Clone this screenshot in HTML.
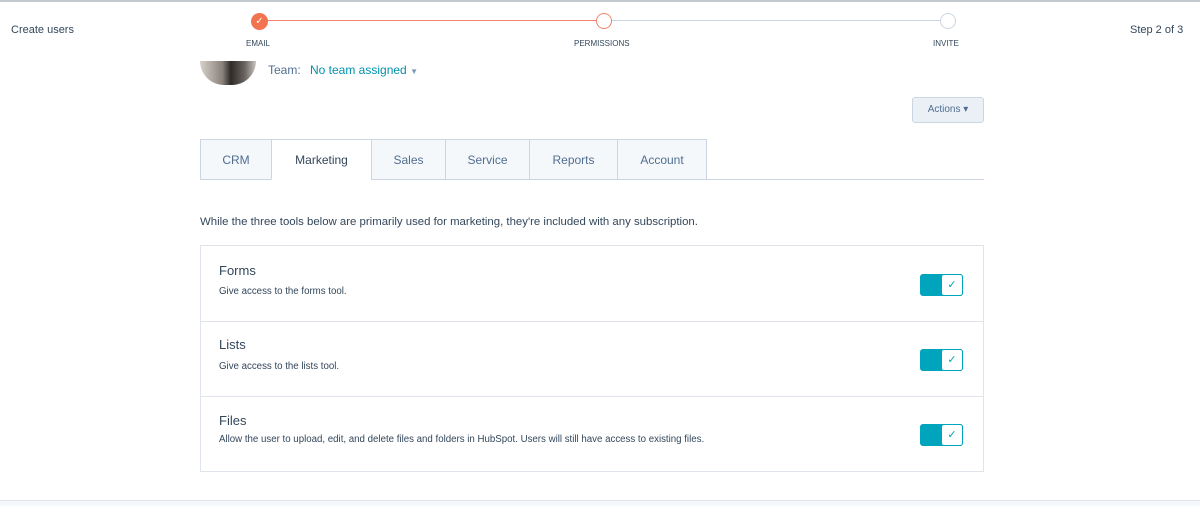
<!DOCTYPE html>
<html><head><style>
*{margin:0;padding:0;box-sizing:border-box}
body{width:1200px;height:506px;background:#fff;font-family:"Liberation Sans",sans-serif;color:#33475b;position:relative;overflow:hidden}
.a{position:absolute}
.tab{position:absolute;top:139px;height:41px;background:#f5f8fa;border:1px solid #cbd6e2;font-size:12px;color:#506e91;text-align:center;line-height:40px}
.row{position:absolute;left:200px;width:784px;border:1px solid #dfe3eb;}
.tg{position:absolute;left:920px;width:43px;height:22px;background:#00a4bd;border-radius:3px}
.tg div{position:absolute;right:0;top:0;width:22px;height:22px;background:#fff;border:1px solid #00a4bd;border-radius:3px;color:#00a4bd;font-size:11px;text-align:center;line-height:20px}
.h{font-size:13px;color:#33475b}
.s{font-size:9.7px;color:#33475b}
</style></head><body>
<div class="a" style="left:0;top:0;width:1200px;height:2px;background:#c4c9ce"></div>
<div class="a" style="left:11px;top:24px;font-size:11px;color:#33475b">Create users</div>
<div class="a" style="left:1130px;top:24px;font-size:11px;color:#33475b">Step 2 of 3</div>
<div class="a" style="left:260px;top:20px;width:344px;height:1px;background:#f2826a"></div>
<div class="a" style="left:604px;top:20px;width:344px;height:1px;background:#cbd6e2"></div>
<div class="a" style="left:251px;top:13px;width:17px;height:17px;border-radius:50%;background:#f2734f;color:#fff;font-size:10px;text-align:center;line-height:17px">✓</div>
<div class="a" style="left:596px;top:13px;width:16px;height:16px;border-radius:50%;background:#fff;border:1.5px solid #f2826a"></div>
<div class="a" style="left:940px;top:13px;width:16px;height:16px;border-radius:50%;background:#fff;border:1.5px solid #cbd6e2"></div>
<div class="a" style="left:246px;top:39px;font-size:8px;color:#33475b">EMAIL</div>
<div class="a" style="left:574px;top:39px;font-size:8px;color:#33475b">PERMISSIONS</div>
<div class="a" style="left:933px;top:39px;font-size:8px;color:#33475b">INVITE</div>
<div class="a" style="left:200px;top:61px;width:56px;height:24px;border-radius:0 0 28px 28px;background:linear-gradient(90deg,#d8d2cc 0%,#8a817a 40%,#2e2b2a 55%,#6b6460 80%,#c9c4c0 100%)"></div>
<div class="a" style="left:268px;top:63px;font-size:12px;color:#516f90">Team:</div>
<div class="a" style="left:310px;top:63px;font-size:12px;color:#0091ae">No team assigned <span style="font-size:8px;color:#7c98b6">▼</span></div>
<div class="a" style="left:912px;top:97px;width:72px;height:26px;background:#eaf0f6;border:1px solid #cbd6e2;border-radius:3px;font-size:10px;color:#506e91;text-align:center;line-height:24px">Actions ▾</div>
<div class="a" style="left:200px;top:179px;width:784px;height:1px;background:#cbd6e2"></div>
<div class="tab" style="left:200px;width:72px">CRM</div>
<div class="tab" style="left:271px;width:101px;background:#fff;border-bottom-color:#fff;color:#33475b">Marketing</div>
<div class="tab" style="left:371px;width:75px">Sales</div>
<div class="tab" style="left:445px;width:85px">Service</div>
<div class="tab" style="left:529px;width:89px">Reports</div>
<div class="tab" style="left:617px;width:90px">Account</div>
<div class="a" style="left:200px;top:216px;font-size:11.4px;color:#33475b">While the three tools below are primarily used for marketing, they're included with any subscription.</div>
<div class="row" style="top:245px;height:227px"></div>
<div class="a" style="left:200px;top:321px;width:784px;height:1px;background:#dfe3eb"></div>
<div class="a" style="left:200px;top:396px;width:784px;height:1px;background:#dfe3eb"></div>
<div class="a h" style="left:219px;top:263px">Forms</div>
<div class="a s" style="left:219px;top:286px">Give access to the forms tool.</div>
<div class="tg" style="top:274px"><div>✓</div></div>
<div class="a h" style="left:219px;top:337px">Lists</div>
<div class="a s" style="left:219px;top:361px">Give access to the lists tool.</div>
<div class="tg" style="top:349px"><div>✓</div></div>
<div class="a h" style="left:219px;top:413px">Files</div>
<div class="a s" style="left:219px;top:434px">Allow the user to upload, edit, and delete files and folders in HubSpot. Users will still have access to existing files.</div>
<div class="tg" style="top:424px"><div>✓</div></div>
<div class="a" style="left:0;top:500px;width:1200px;height:6px;background:#f5f8fa;border-top:1px solid #dfe3eb"></div>
</body></html>
